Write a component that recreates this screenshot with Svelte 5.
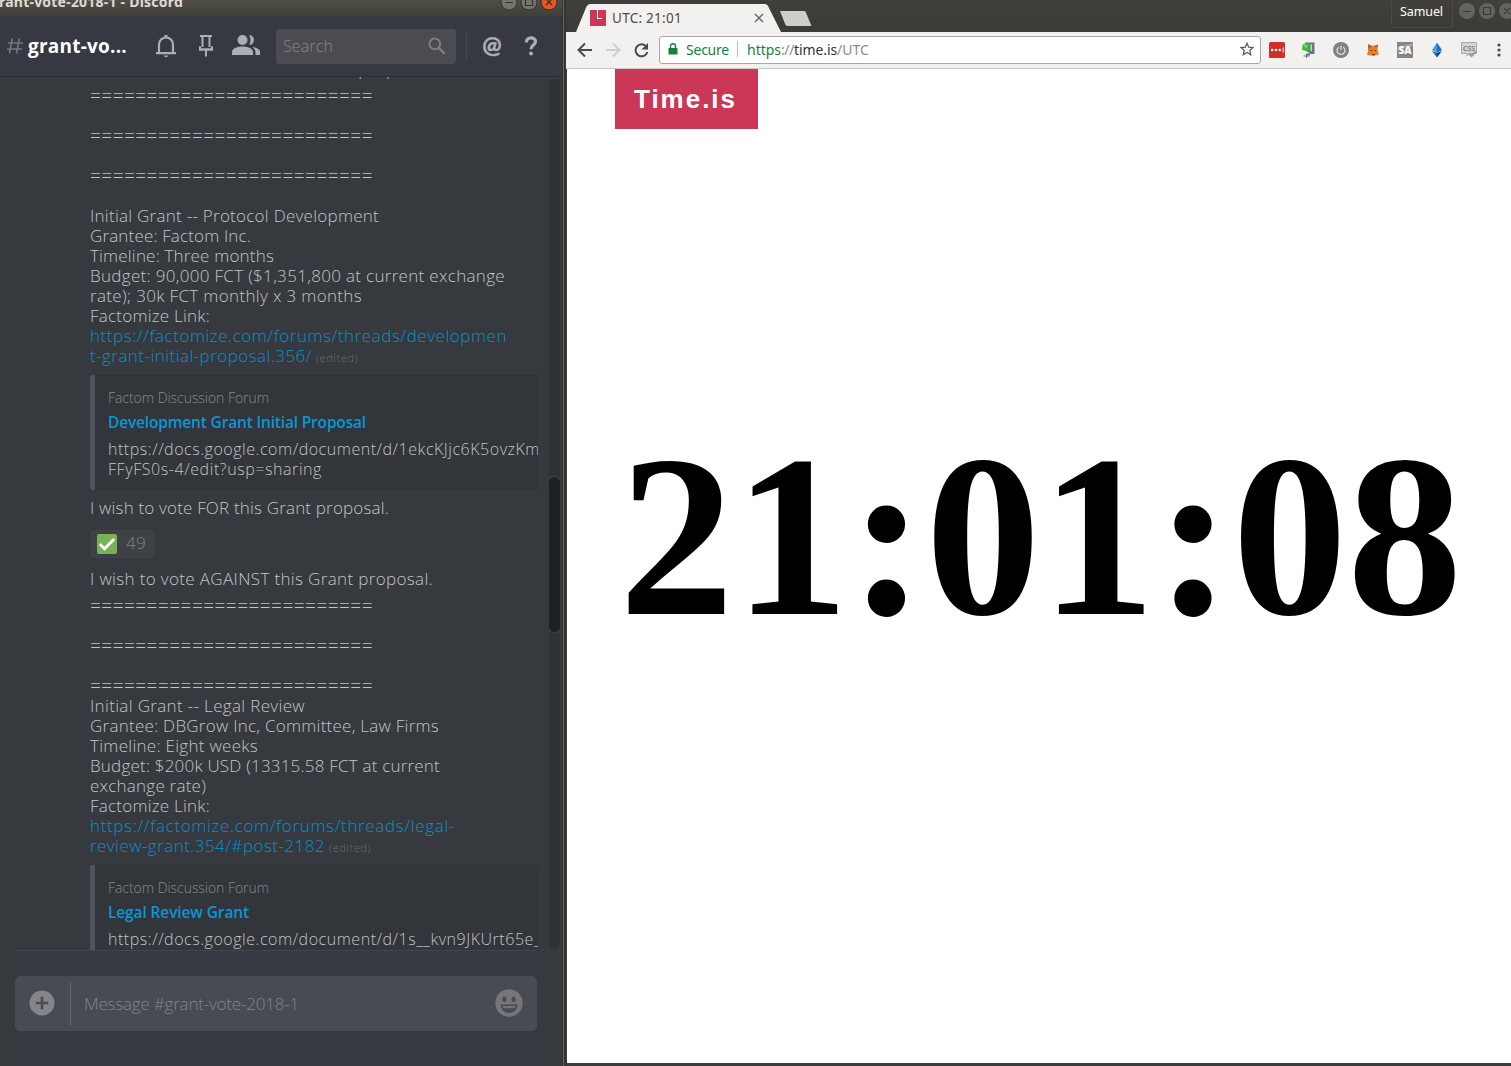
<script>
  // Tracks text so that a run occupies the given width.
  function fit(node, width) {
    const range = document.createRange();
    range.selectNodeContents(node);
    const natural = range.getBoundingClientRect().width;
    const count = node.textContent.length;
    if (count > 1) node.style.letterSpacing = `${(width - natural) / count}px`;
  }

  const rule = { text: '=========================', width: 283, kind: 'rule' };
  const gap = { text: '' };

  const protocol = [
    rule, gap, rule, gap, rule, gap,
    { text: 'Initial Grant -- Protocol Development', width: 289 },
    { text: 'Grantee: Factom Inc.', width: 161 },
    { text: 'Timeline: Three months', width: 184 },
    { text: 'Budget: 90,000 FCT ($1,351,800 at current exchange', width: 415 },
    { text: 'rate); 30k FCT monthly x 3 months', width: 272 },
    { text: 'Factomize Link:', width: 120 },
    { text: 'https://factomize.com/forums/threads/developmen', width: 417, kind: 'link' },
    { text: 't-grant-initial-proposal.356/', width: 222, kind: 'link', edited: true },
  ];
  const legal = [
    rule, gap, rule, gap, rule,
    { text: 'Initial Grant -- Legal Review', width: 215 },
    { text: 'Grantee: DBGrow Inc, Committee, Law Firms', width: 349 },
    { text: 'Timeline: Eight weeks', width: 168 },
    { text: 'Budget: $200k USD (13315.58 FCT at current', width: 350 },
    { text: 'exchange rate)', width: 116 },
    { text: 'Factomize Link:', width: 120 },
    { text: 'https://factomize.com/forums/threads/legal-', width: 365, kind: 'link' },
    { text: 'review-grant.354/#post-2182', width: 235, kind: 'link', edited: true },
  ];
</script>

{#snippet message(lines)}
  <div class="message">
    {#each lines as l}
      <div class="line">
        {#if l.text}<span class={l.kind} use:fit={l.width}>{l.text}</span>{/if}{#if l.edited}<span class="edited" use:fit={42}>(edited)</span>{/if}
      </div>
    {/each}
  </div>
{/snippet}

{#snippet embed(title, titleWidth, rows)}
  <div class="embed">
    <div class="provider"><span use:fit={161}>Factom Discussion Forum</span></div>
    <div class="title"><span use:fit={titleWidth}>{title}</span></div>
    <div class="desc">
      {#each rows as r}<div><span use:fit={r.width}>{r.text}</span></div>{/each}
    </div>
  </div>
{/snippet}

<div class="desktop">
  <section class="chat">
    <div class="titlebar">
      <div class="wtitle"><span use:fit={184}>rant-vote-2018-1 - Discord</span></div>
      <svg class="wbtns" width="62" height="16" viewBox="0 0 62 16">
        <g stroke="#33322e" stroke-width="1">
          <circle cx="12" cy="2" r="8" fill="#777569" /><circle cx="32" cy="2" r="8" fill="#777569" /><circle cx="52" cy="2" r="8" fill="#e95420" />
        </g>
        <path d="M8 2.5h8M28.5 -1.5h7v7h-7zM49 -1l6 6M55 -1l-6 6" fill="none" stroke="#33322e" stroke-width="1.2" />
      </svg>
    </div>

    <header>
      <svg class="hash" width="18" height="18" viewBox="0 0 18 18" fill="none" stroke="#72767d" stroke-width="1.6"><path d="M6.3 1.5 3.5 16.5M13.3 1.5 10.5 16.5M2 6h15M1 12h15" /></svg>
      <div class="channel"><span use:fit={99}>grant-vo...</span></div>
      <svg class="bell" width="22" height="24" viewBox="0 0 22 24"><path d="M4 19V10.500a7 7 0 0 1 14 0V19" fill="none" stroke="#adaeb1" stroke-width="2.2" /><path d="M1 18h20v2.200H1zM8.500 21.500h5q-.8 1.700-2.500 1.700t-2.500-1.700zM9.500 1h3v2h-3z" fill="#adaeb1" /></svg>
      <svg class="pin" width="16" height="24" viewBox="0 0 16 24"><path d="M2 2h12M4.500 2v11M11.500 2v11M2 12.200v3.300h12v-3.300M8 16v6.500" fill="none" stroke="#adaeb1" stroke-width="2" /><path d="M1 14.500h14v2H1z" fill="#adaeb1" /></svg>
      <svg class="people" width="28" height="22" viewBox="0 0 28 22" fill="#adaeb1"><circle cx="10.500" cy="6" r="5" /><path d="M0 21v-3c0-3.800 6-5.500 10.500-5.500S21 14.200 21 18v3zM17 1.200c6.500-1 6.500 10.500 0 9.600 2-3 2-6.600 0-9.600zM20 13c4 .5 8 2 8 5v3h-4.500v-3c0-2-1.500-3.700-3.500-5z" /></svg>
      <div class="search">
        <span use:fit={50}>Search</span>
        <svg width="18" height="18" viewBox="0 0 18 18" fill="none" stroke="#7d7e82"><circle cx="6.800" cy="6.800" r="5.400" stroke-width="2" /><path d="m10.800 10.800 6 6" stroke-width="2.400" /></svg>
      </div>
      <i class="divider"></i>
      <span class="at">@</span>
      <svg class="help" width="14" height="20" viewBox="0 0 14 20"><path d="M2.400 6.500C2.400 0 11.500.8 11.500 5.500c0 3.600-4.500 3.400-4.500 7.800" fill="none" stroke="#adaeb1" stroke-width="3.200" /><circle cx="7" cy="17.500" r="2" fill="#adaeb1" /></svg>
    </header>

    <div class="body">
      <div class="scroll">
        <div class="line vote top"><span use:fit={343}>I wish to vote AGAINST this Grant proposal.</span></div>
        {@render message(protocol)}
        {@render embed('Development Grant Initial Proposal', 258, [
          { text: 'https://docs.google.com/document/d/1ekcKJjc6K5ovzKm', width: 432 },
          { text: 'FFyFS0s-4/edit?usp=sharing', width: 214 },
        ])}
        <div class="line vote for"><span use:fit={299}>I wish to vote FOR this Grant proposal.</span></div>
        <div class="reaction">
          <svg width="20" height="20" viewBox="0 0 20 20"><rect width="20" height="20" rx="2" fill="#77b255" /><path d="m3.600 10.800 4 3.900 8.700-9" fill="none" stroke="#fff" stroke-width="2.900" stroke-linecap="round" /></svg>
          <span use:fit={20}>49</span>
        </div>
        <div class="line vote against"><span use:fit={343}>I wish to vote AGAINST this Grant proposal.</span></div>
        {@render message(legal)}
        {@render embed('Legal Review Grant', 141, [
          { text: 'https://docs.google.com/document/d/1s__kvn9JKUrt65e_', width: 433 },
        ])}
      </div>
      <div class="track"><div class="thumb"></div></div>
    </div>

    <footer>
      <div class="composer">
        <svg class="plus" width="26" height="26" viewBox="0 0 26 26"><circle cx="13" cy="13" r="12.500" fill="#84858a" /><path d="M13 6.700v12.600M6.700 13h12.600" stroke="#484b52" stroke-width="2.600" /></svg>
        <i></i>
        <div class="placeholder"><span use:fit={215}>Message #grant-vote-2018-1</span></div>
        <svg class="smile" width="28" height="28" viewBox="0 0 28 28"><circle cx="14" cy="14" r="13.700" fill="#75767a" /><g fill="#484b52"><ellipse cx="9.400" cy="10.300" rx="2" ry="2.800" /><ellipse cx="18.600" cy="10.300" rx="2" ry="2.800" /><path d="M5.500 15.500h17c0 4.500-3.800 8.500-8.500 8.500s-8.500-4-8.500-8.500z" /></g><path d="M7.500 17h13c0 1.300-.7 2-2 2.300H9.500c-1.300-.3-2-1-2-2.300z" fill="#75767a" /></svg>
      </div>
    </footer>
  </section>

  <div class="edge"></div>

  <section class="browser">
    <div class="tabs">
      <div class="tab">
        <svg class="shape" width="210" height="28" viewBox="0 0 210 28"><path d="M0 28 10.500 2.500Q12 0 14 0H189Q191 0 192 2L205 28z" fill="#f2f1f0" /></svg>
        <svg width="16" height="16" viewBox="0 0 16 16"><path d="M0 0h16v16H0z" fill="#cb3756" /><path d="M7.500 0v8.500H12" fill="none" stroke="#fff" /></svg>
        <div class="tabtitle"><span use:fit={70}>UTC: 21:01</span></div>
        <svg class="close" width="10" height="10" viewBox="0 0 10 10"><path d="m1 1 8 8M9 1 1 9" stroke="#6b6b6b" stroke-width="1.500" /></svg>
      </div>
      <svg class="newtab" width="33" height="15" viewBox="0 0 33 15"><path d="M1 0h24q1.200 0 1.700 1L32.500 15H9q-2 0-2.700-1.500z" fill="#cfcdcb" /></svg>
      <div class="user"><span use:fit={43}>Samuel</span></div>
      <svg class="cbtns" width="52" height="24" viewBox="0 0 52 24"><g fill="#65635d"><circle cx="8" cy="11" r="8" /><circle cx="28" cy="11" r="8" /><circle cx="48" cy="11" r="8" /></g><path d="M4 11.500h8M24.500 7.500h7v7h-7zM45 8l6 6M51 8l-6 6" fill="none" stroke="#3c3b37" stroke-width="1.200" /></svg>
    </div>

    <div class="toolbar">
      <svg class="nav" width="74" height="16" viewBox="0 0 74 16" fill="none" stroke-width="2"><path d="M15 8H2M8 1.500 1.500 8 8 14.500" stroke="#4a4a4a" /><path d="M29 8h13M36 1.500 42.500 8 36 14.500" stroke="#cfcecd" /><path d="M69.300 4.500A6 6 0 1 0 70.400 10" stroke="#4a4a4a" /><path d="M71 1v6.500h-6.500z" fill="#4a4a4a" /></svg>
      <div class="omnibox">
        <svg width="10" height="12" viewBox="0 0 10 12"><path d="M1 5h8.500v6.500H.500V5z" fill="#188038" /><path d="M2.500 5V3.300a2.500 2.500 0 0 1 5 0V5" fill="none" stroke="#188038" stroke-width="1.400" /></svg>
        <div class="secure"><span use:fit={43}>Secure</span></div>
        <i></i>
        <div class="url"><span class="scheme" use:fit={34}>https</span><span class="dim" use:fit={13}>://</span><span class="host" use:fit={43}>time.is</span><span class="dim" use:fit={32}>/UTC</span></div>
        <svg class="star" width="14" height="14" viewBox="0 0 14 14"><path d="m7 1.300 1.700 3.900 4.300.4-3.200 2.900.9 4.200L7 10.500l-3.700 2.200.9-4.200L1 5.600l4.300-.4z" fill="none" stroke="#5c5c5c" stroke-width="1.300" /></svg>
      </div>
      <div class="exts">
        <svg viewBox="0 0 16 16"><rect width="16" height="16" rx="1.500" fill="#d32d2c" /><g fill="#fff"><circle cx="3.200" cy="8" r="1.300" /><circle cx="7" cy="8" r="1.300" /><circle cx="10.800" cy="8" r="1.300" /><path d="M13.700 5.500h.9v5h-.9z" /></g></svg>
        <svg viewBox="0 0 16 16"><path d="M4 .5h9.500v11.500H9v1.500H5v-2h4L4 8z" fill="#617984" /><path d="m1.500 2.500 7-1v6L5 9 1 8z" fill="#35c52b" /><path d="m2.500 3.500 3.500-.5-.5 3z" fill="#9beb72" /><path d="M9.500 2.500h1.500v6.500h-1.500z" fill="#c6d4da" /><path d="M2.500 14h6M5.500 12v4" stroke="#5f7582" /></svg>
        <svg viewBox="0 0 16 16"><circle cx="8" cy="8" r="8" fill="#808080" /><path d="M5.700 5.200a4 4 0 1 0 4.600 0M8 3.800V8" fill="none" stroke="#ddd" stroke-width="1.300" /></svg>
        <svg viewBox="0 0 16 16"><path d="m3 2.200 3.500 1.500h4L13 2.500l-.5 5 1.500 5-4 1H5l-3-.5 1-4z" fill="#e87e28" /><path d="m3 2.200 3.500 1.500L4 7.500zM13 2.500l-1 3-3-1.500z" fill="#b65822" /><path d="M5.500 8h1.500v1H5.500zM9.500 8H11v1H9.500zM7 12h3v1.300H7z" fill="#683923" /></svg>
        <svg viewBox="0 0 16 16"><path d="M0 0h16v16H0z" fill="#858585" /><path d="M0 5 16 1v3L0 9z" fill="#a2a2a2" /><text x="8" y="12.300" text-anchor="middle" font-size="10" font-weight="900" fill="#fff">SA</text></svg>
        <svg viewBox="0 0 16 16"><path d="M8 .5 3 8l5 3z" fill="#4b9ce0" /><path d="m8 .5 5 7.500-5 3z" fill="#2473bd" /><path d="m3 9 5 6.500V11z" fill="#1b5fa9" /><path d="m13 9-5 6.500V11z" fill="#15406f" /></svg>
        <svg viewBox="0 0 16 16"><path d="M.5.500h15v11H9L6 14v-2.500H.500z" fill="#d5d5d5" stroke="#a9a9a9" /><text x="8" y="8.800" text-anchor="middle" font-size="7.500" font-weight="700" textLength="12.500" fill="#888">CSS</text><path d="m8 11.500 2.500 2.500 4.500-4.500" fill="none" stroke="#9b9b9b" stroke-width="2" /></svg>
      </div>
      <svg class="menu" width="4" height="14" viewBox="0 0 4 14" fill="#4a4a4a"><circle cx="2" cy="2" r="1.600" /><circle cx="2" cy="7" r="1.600" /><circle cx="2" cy="12" r="1.600" /></svg>
    </div>

    <main>
      <div class="logo"><span use:fit={103}>Time.is</span></div>
      <div class="clock">21:01:08</div>
    </main>
  </section>
</div>

<style>
  :global(body) { margin: 0; overflow: hidden; }
  .desktop { display: flex; width: 1511px; height: 1066px; overflow: hidden; background: #36393e; }
  svg { display: block; flex: none; }
  span { white-space: pre; }

  .chat { width: 562px; flex: none; display: flex; flex-direction: column; background: #36393e; font-family: "Open Sans", "Noto Sans", sans-serif; font-weight: 350; }
  .titlebar { height: 16px; flex: none; display: flex; justify-content: space-between; overflow: hidden; background: linear-gradient(#4f4e47, #403f3a); }
  .wtitle { color: #dfdbd2; font: 700 14px/20px "Noto Sans", sans-serif; margin: -8px 0 0 -1px; }
  .wbtns { margin-right: 3px; }

  header { height: 60px; flex: none; display: flex; align-items: center; background: #363941; border-bottom: 1px solid #2b2d31; }
  .hash { margin-left: 6px; }
  .channel { width: 99px; margin-left: 4px; color: #fff; font-weight: 700; font-size: 19px; line-height: 24px; }
  .bell { margin-left: 28px; }
  .pin { margin-left: 21px; }
  .people { margin: 0 16px 0 18px; position: relative; top: -1px; }
  .search { box-sizing: border-box; width: 180px; height: 35px; border-radius: 3px; padding: 0 10px 0 7px; display: flex; align-items: center; justify-content: space-between; background: #4b4c51; color: #85868a; font-size: 16px; }
  .divider { width: 1px; height: 28px; margin-left: 10px; background: #47494f; }
  .at { width: 22px; margin-left: 14px; color: #adaeb1; font: 700 23px/26px Lato, sans-serif; text-align: center; padding-bottom: 5px; -webkit-text-stroke: .5px #adaeb1; }
  .help { margin-left: 21px; }

  .body { height: 873px; flex: none; display: flex; }
  .scroll { width: 448px; height: 873px; margin-left: 90px; overflow: hidden; color: #c3c4c5; font-size: 17px; }
  .line { height: 20px; line-height: 20px; white-space: nowrap; }
  .top { margin: -18px 0 7px; }
  .rule { display: block; height: 20px; line-height: 18px; color: #c0c2c3; font-size: 19px; }
  .link { color: #0391d0; }
  .edited { margin-left: 4px; font-size: 11px; color: #6a6d72; }
  .for { margin-top: 8px; }
  .against { margin: 11px 0 7px; }
  .embed { box-sizing: border-box; height: 115px; margin-top: 9px; padding: 13px 0 0 13px; overflow: hidden; border-left: 5px solid #4f545c; border-radius: 3px 0 0 3px; background: #323539; box-shadow: inset 0 1px #2f3236, inset 0 -1px #2f3236; white-space: nowrap; }
  .provider { color: #858b93; font-size: 14px; line-height: 20px; }
  .title { margin-top: 4px; color: #0798d5; font-weight: 550; font-size: 15.5px; line-height: 20px; }
  .desc { margin-top: 7px; font-size: 16px; line-height: 20px; }
  .reaction { box-sizing: border-box; width: 65px; height: 28px; margin-top: 12px; padding: 0 7px; display: flex; align-items: center; gap: 9px; border-radius: 4px; background: #3e4146; color: #7f8185; font-size: 17px; line-height: 26px; }
  .reaction span { margin-bottom: 2px; }
  .track { width: 11px; margin: 2px 0 2px 11px; border-radius: 6px; background: #303136; }
  .thumb { width: 11px; height: 155px; margin-top: 398px; border-radius: 6px; background: #1e2124; outline: 2px solid #36393e; }

  footer { width: 522px; height: 116px; margin-left: 15px; border-top: 1px solid #43464c; background: #363941; }
  .composer { height: 55px; margin-top: 25px; display: flex; align-items: center; border-radius: 5px; background: #484b52; }
  .plus { margin-left: 14px; position: relative; top: -1px; }
  .composer i { width: 1px; height: 44px; margin-left: 15px; background: #606268; }
  .placeholder { flex: 1; margin-left: 13px; color: #828488; font-size: 17px; }
  .smile { margin-right: 14px; position: relative; top: -1px; }

  .edge { width: 1px; flex: none; border: solid #35342f; border-width: 0 2px 0 1px; background: #66645b; }

  .browser { flex: 1; display: flex; flex-direction: column; background: #3c3b37; font-family: "Noto Sans", "Open Sans", sans-serif; }
  .tabs { height: 32px; flex: none; display: flex; align-items: flex-start; background: linear-gradient(#403f3a, #3c3b37); }
  .tab { position: relative; box-sizing: border-box; width: 206px; height: 28px; margin: 4px 0 0 10px; padding-left: 14px; display: flex; align-items: center; }
  .tab > * { position: relative; }
  .tab > .shape { position: absolute; left: 0; top: 0; }
  .tabtitle { width: 70px; margin-left: 6px; color: #4b4b4b; font-size: 13.5px; }
  .close { margin-left: 72px; }
  .newtab { margin: 11px 0 0 -3px; }
  .user { box-sizing: border-box; width: 62px; height: 28px; margin-left: auto; padding-left: 8px; border: 1px solid #4b4a45; border-top: 0; border-radius: 0 0 4px 4px; color: #fff; font-size: 12.5px; line-height: 23px; }
  .cbtns { margin-left: 6px; }

  .toolbar { height: 36px; flex: none; display: flex; align-items: center; background: #f2f1f0; border-bottom: 1px solid #cac9c8; }
  .nav { margin-left: 11px; }
  .omnibox { box-sizing: border-box; width: 602px; height: 28px; margin-left: 8px; padding: 0 6px 2px 8px; display: flex; align-items: center; border: 1px solid #a9a8a7; border-radius: 3px; background: #fff; font-size: 14px; }
  .secure { width: 43px; margin-left: 8px; color: #188038; }
  .omnibox i { width: 1px; height: 16px; margin: 0 9px 0 8px; background: #bcbcbc; }
  .url { flex: 1; }
  .scheme { color: #188038; }
  .dim { color: #8c8c8c; }
  .host { color: #333; }
  .exts { display: flex; gap: 16px; margin-left: 8px; }
  .exts svg { width: 16px; height: 16px; }
  .menu { margin-left: 20px; }

  main { height: 994px; box-sizing: border-box; margin-left: 1px; overflow: hidden; background: #fff; }
  .logo { width: 143px; height: 60px; box-sizing: border-box; margin-left: 48px; padding-left: 19px; background: #cb3756; color: #fff; font: 700 26px/61px "Liberation Sans", sans-serif; }
  .clock { margin: 278px 0 0 52px; color: #000; font: 700 230px/260px "Liberation Serif", serif; white-space: nowrap; }
</style>
